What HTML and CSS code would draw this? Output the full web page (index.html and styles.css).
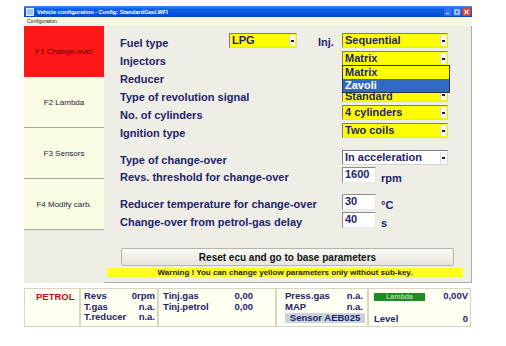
FILE: index.html
```html
<!DOCTYPE html>
<html lang="en">
<head>
    <meta charset="UTF-8">
    <meta name="viewport" content="width=device-width, initial-scale=1.0">
    <title>Vehicle configuration</title>
    <link rel="stylesheet" href="styles.css">
</head>
<body>

    <div class="window">

        <!-- Title bar -->
        <div class="titlebar">
            <span class="app-icon"></span>
            <span class="title">Vehicle configuration - Config: StandardGasI.WFI</span>
            <span class="win-btns">
                <svg class="wbtn" width="8" height="8" viewBox="0 0 8 8"><rect width="8" height="8" rx="1" fill="#2F6FF0"/><rect x="2" y="5" width="3" height="1" fill="#fff"/></svg>
                <svg class="wbtn" width="8" height="8" viewBox="0 0 8 8"><rect width="8" height="8" rx="1" fill="#2F6FF0"/><rect x="2" y="2" width="4" height="4" fill="none" stroke="#fff" stroke-width="1"/></svg>
                <svg class="wbtn" width="9" height="8" viewBox="0 0 9 8"><rect width="9" height="8" rx="1" fill="#D9462B"/><path d="M2.5 2 L6.5 6 M6.5 2 L2.5 6" stroke="#fff" stroke-width="1.2"/></svg>
            </span>
        </div>

        <div class="menubar">Configuration</div>

        <div class="main">

            <!-- Tabs -->
            <div class="tabs">
                <div class="tab active">F1 Change-over</div>
                <div class="tab">F2 Lambda</div>
                <div class="tab">F3 Sensors</div>
                <div class="tab">F4 Modify carb.</div>
                <div class="tab-fill"></div>
            </div>

            <!-- Parameters -->
            <div class="panel">
                <div class="row">
                    <span class="lbl lbl-short">Fuel type</span>
                    <div class="combo yellow combo-small"><span class="val">LPG</span><span class="arrow"></span></div>
                    <span class="inj">Inj.</span>
                    <div class="combo yellow"><span class="val">Sequential</span><span class="arrow"></span></div>
                </div>
                <div class="row">
                    <span class="lbl">Injectors</span>
                    <div class="combo yellow">
                        <span class="val">Matrix</span><span class="arrow"></span>
                        <div class="droplist">
                            <div class="opt">Matrix</div>
                            <div class="opt selected">Zavoli</div>
                        </div>
                    </div>
                </div>
                <div class="row">
                    <span class="lbl">Reducer</span>
                </div>
                <div class="row">
                    <span class="lbl">Type of revolution signal</span>
                    <div class="combo yellow combo-under"><span class="val">Standard</span><span class="arrow"></span></div>
                </div>
                <div class="row">
                    <span class="lbl">No. of cylinders</span>
                    <div class="combo yellow"><span class="val">4 cylinders</span><span class="arrow"></span></div>
                </div>
                <div class="row">
                    <span class="lbl">Ignition type</span>
                    <div class="combo yellow"><span class="val">Two coils</span><span class="arrow"></span></div>
                </div>

                <div class="row row-first">
                    <span class="lbl">Type of change-over</span>
                    <div class="combo white"><span class="val">In acceleration</span><span class="arrow"></span></div>
                </div>
                <div class="row row-short">
                    <span class="lbl">Revs. threshold for change-over</span>
                    <div class="field">1600</div>
                    <span class="unit">rpm</span>
                </div>
                <div class="row row-gap">
                    <span class="lbl">Reducer temperature for change-over</span>
                    <div class="field">30</div>
                    <span class="unit">°C</span>
                </div>
                <div class="row">
                    <span class="lbl">Change-over from petrol-gas delay</span>
                    <div class="field">40</div>
                    <span class="unit">s</span>
                </div>

                <button class="btn-reset">Reset ecu and go to base parameters</button>
                <div class="warning">Warning ! You can change yellow parameters only without sub-key.</div>
            </div>
        </div>

        <!-- Status bar -->
        <div class="status">
            <div class="box box-fuel">PETROL</div>
            <div class="box box-revs">
                <span>Revs</span><span class="num">0rpm</span>
                <span>T.gas</span><span class="num">n.a.</span>
                <span>T.reducer</span><span class="num">n.a.</span>
            </div>
            <div class="box box-tinj">
                <span>Tinj.gas</span><span class="num">0,00</span>
                <span>Tinj.petrol</span><span class="num">0,00</span>
            </div>
            <div class="box box-press">
                <span>Press.gas</span><span class="num">n.a.</span>
                <span>MAP</span><span class="num">n.a.</span>
                <span class="sensor">Sensor AEB025</span>
            </div>
            <div class="box box-lambda">
                <span class="lambda-btn">Lambda</span><span class="num">0,00V</span>
                <span class="level">Level</span><span class="num level">0</span>
            </div>
        </div>

    </div>

</body>
</html>
```

FILE: styles.css
```css
/* General Styling */
body {
    font-family: 'Liberation Sans', Arial, sans-serif;
    background: #fff;
    margin: 0;
    padding: 0;
}

.window {
    width: 448px;
    margin: 6px 0 0 24px;
}

/* Title bar */
.titlebar {
    height: 11px;
    display: flex;
    align-items: center;
    background: linear-gradient(#3D8CF4, #0A5DE6 30%, #0552D8 80%, #0445BE);
    padding-left: 2px;
}

.app-icon {
    width: 6px;
    height: 6px;
    background: #9CC4F4;
    border: 1px solid #E6F0FF;
    margin-right: 3px;
}

.title {
    color: #fff;
    font-size: 5.6px;
    font-weight: bold;
    flex: 1;
}

.win-btns {
    display: flex;
    gap: 1px;
    margin-right: 1px;
}

.wbtn {
    display: block;
}

.menubar {
    height: 9px;
    background: #F6F6E6;
    font-size: 5px;
    line-height: 9px;
    padding-left: 3px;
    color: #222;
}

/* Main area */
.main {
    display: flex;
    height: 257px;
}

.tabs {
    width: 80px;
    display: flex;
    flex-direction: column;
    background: #ECECE2;
}

.tab {
    height: 50px;
    border-bottom: 1px solid #A8A898;
    background: #FBFBE4;
    display: flex;
    align-items: center;
    justify-content: center;
    font-size: 8px;
    color: #1C1C3C;
}

.tab.active {
    background: #FF1818;
    color: #6A0000;
    border-bottom-color: #FF1818;
}

.tab-fill {
    flex: 1;
}

/* Parameter panel */
.panel {
    flex: 1;
    background: #EEEEE6;
    border-right: 1px solid #B0B0A0;
    border-bottom: 1px solid #B0B0A0;
    padding: 7px 8px 5px 3px;
    display: flex;
    flex-direction: column;
}

.row {
    display: flex;
    align-items: flex-start;
    height: 18px;
    padding-left: 13px;
}

.row-first {
    margin-top: 9px;
    height: 17px;
}

.row-short {
    height: 17px;
}

.row-gap {
    margin-top: 10px;
}

.lbl {
    width: 222px;
    font-size: 11px;
    font-weight: bold;
    line-height: 21px;
    color: #23236C;
    white-space: nowrap;
}

.lbl-short {
    width: 109px;
}

.inj {
    width: 24px;
    margin-left: 21px;
    font-size: 11px;
    font-weight: bold;
    line-height: 19px;
    color: #23236C;
}

/* Combo boxes */
.combo {
    position: relative;
    width: 106px;
    height: 15px;
    box-sizing: border-box;
    display: flex;
    border: 1px solid;
    border-color: #7C7C7C #D4D4D4 #D4D4D4 #7C7C7C;
    font-size: 11px;
    font-weight: bold;
    color: #23236C;
}

.combo-small {
    width: 68px;
}

/* the open list covers the top of this one */
.combo-under .val {
    overflow: hidden;
    line-height: 9px;
    margin-top: 4px;
    height: 9px;
}

.combo.yellow {
    background: #FFFF00;
}

.combo.white {
    background: #fff;
}

.val {
    flex: 1;
    padding-left: 2px;
    line-height: 13px;
}

.arrow {
    width: 5px;
    margin: 1px;
    background: #F4F4F0;
    border-left: 1px solid #D8D8D0;
    position: relative;
}

.arrow::after {
    content: "";
    position: absolute;
    left: 1px;
    top: 5px;
    width: 3px;
    height: 2px;
    background: #222;
}

.droplist {
    position: absolute;
    top: 13px;
    left: -1px;
    width: 106px;
    border: 1px solid #333;
    background: #FFFF00;
    z-index: 2;
}

.opt {
    height: 13px;
    line-height: 13px;
    padding-left: 2px;
}

.opt.selected {
    background: #3169C6;
    color: #fff;
}

/* Number fields */
.field {
    width: 34px;
    height: 16px;
    box-sizing: border-box;
    background: #fff;
    border: 1px solid;
    border-color: #8C8C8C #E8E8E8 #E8E8E8 #8C8C8C;
    font-size: 11px;
    font-weight: bold;
    line-height: 13px;
    padding-left: 2px;
    color: #23236C;
}

.unit {
    margin-left: 5px;
    font-size: 11px;
    font-weight: bold;
    line-height: 22px;
    color: #23236C;
}

/* Buttons */
.btn-reset {
    margin: auto 0 0 14px;
    width: 333px;
    height: 18px;
    font-family: inherit;
    font-size: 10px;
    font-weight: bold;
    color: #111;
    background: linear-gradient(#FAFAF6, #E6E6DE);
    border: 1px solid #B4B4A8;
    border-radius: 2px;
    padding: 0;
}

.warning {
    margin-top: 2px;
    height: 9px;
    background: #FFFF1C;
    font-size: 8px;
    font-weight: bold;
    line-height: 9px;
    text-align: center;
    color: #222;
}

/* Status bar */
.status {
    display: flex;
    margin-top: 5px;
    height: 39px;
}

.box {
    box-sizing: border-box;
    background: #FFFFF2;
    border: 1px solid #D6D6C2;
    font-size: 9.5px;
    font-weight: bold;
    color: #23236C;
    line-height: 10.5px;
}

.box-fuel {
    width: 56px;
    color: #C01010;
    padding: 3px 0 0 11px;
}

.box-revs,
.box-tinj,
.box-press,
.box-lambda {
    display: grid;
    grid-template-columns: 1fr auto;
    align-content: start;
    padding-top: 2px;
}

.box-revs {
    width: 78px;
    padding-left: 3px;
    padding-right: 2px;
}

.box-tinj {
    width: 118px;
    padding-left: 4px;
    padding-right: 22px;
}

.box-press {
    width: 92px;
    padding-left: 8px;
    padding-right: 4px;
}

.num {
    text-align: right;
}

.sensor {
    grid-column: 1 / 3;
    margin-top: 1px;
    margin-right: -2px;
    background: #C8D4D8;
    text-align: center;
    line-height: 10px;
}

.box-lambda {
    width: 103px;
    padding-left: 5px;
    padding-right: 2px;
}

.lambda-btn {
    justify-self: start;
    width: 51px;
    height: 8px;
    margin-top: 2px;
    background: #1E8C22;
    color: #A8D8A8;
    font-size: 7px;
    line-height: 8px;
    text-align: center;
}

.level {
    margin-top: 12px;
}
```
